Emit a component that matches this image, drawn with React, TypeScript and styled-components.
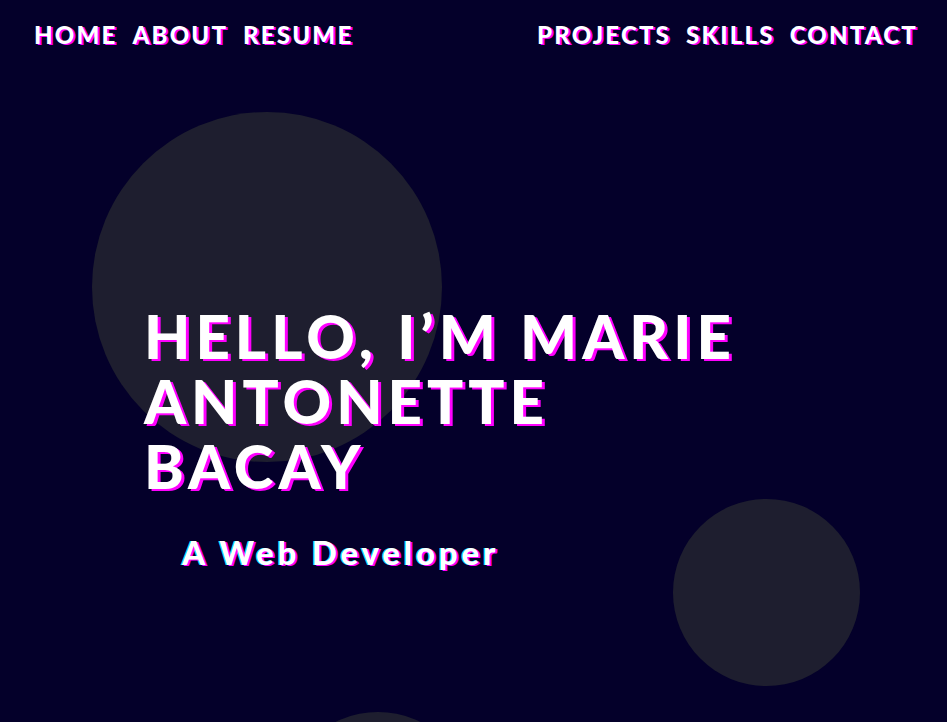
import React from "react";
import styled, { createGlobalStyle } from "styled-components";

const Global = createGlobalStyle`
  html, body { margin: 0; padding: 0; background: #04002a; }
  body { font-family: "Lato", "Noto Sans", sans-serif; overflow: hidden; }
`;

const Page = styled.div`
  position: relative;
  width: 947px;
  height: 722px;
  overflow: hidden;
  background: #04002a;
  color: #ffffff;
`;

const Bubble = styled.div<{ $size: number; $left: number; $top: number }>`
  position: absolute;
  left: ${(p) => p.$left}px;
  top: ${(p) => p.$top}px;
  width: ${(p) => p.$size}px;
  height: ${(p) => p.$size}px;
  border-radius: 50%;
  background: #1e1e2f;
  z-index: 0;
`;

const Nav = styled.nav`
  position: relative;
  z-index: 1;
  display: flex;
  justify-content: space-between;
  align-items: center;
  padding: 20px 29px 0 34px;
`;

const NavGroup = styled.div`
  display: flex;
  gap: 15px;
`;

const NavLink = styled.a`
  font-family: "Lato", sans-serif;
  font-weight: 900;
  font-size: 24px;
  letter-spacing: 2.2px;
  text-transform: uppercase;
  color: #ffffff;
  text-decoration: none;
  text-shadow: 2px 1px 0 #ff00ff;
`;

const Hero = styled.section`
  position: relative;
  z-index: 1;
  display: flex;
  flex-direction: column;
  padding: 255px 0 0 144px;
`;

const Title = styled.h1`
  margin: 0;
  width: 610px;
  font-family: "Lato", sans-serif;
  font-weight: 900;
  font-size: 60px;
  line-height: 65px;
  letter-spacing: 5px;
  text-transform: uppercase;
  color: #ffffff;
  text-shadow: 3px 2px 0 #ff00ff;
`;

const Subtitle = styled.h2`
  margin: 33px 0 0 38px;
  font-family: "Lato", sans-serif;
  font-weight: 900;
  font-size: 33px;
  letter-spacing: 3.8px;
  color: #ffffff;
  text-shadow: 2px 1px 0 #ff00ff, -1px 0 0 #00e5ff;
`;

export default function App() {
  return (
    <Page>
      <Global />
      <Bubble $size={350} $left={92} $top={112} />
      <Bubble $size={187} $left={673} $top={499} />
      <Bubble $size={190} $left={283} $top={712} />
      <Nav>
        <NavGroup>
          <NavLink href="#">Home</NavLink>
          <NavLink href="#">About</NavLink>
          <NavLink href="#">Resume</NavLink>
        </NavGroup>
        <NavGroup>
          <NavLink href="#">Projects</NavLink>
          <NavLink href="#">Skills</NavLink>
          <NavLink href="#">Contact</NavLink>
        </NavGroup>
      </Nav>
      <Hero>
        <Title>Hello, I’m Marie Antonette Bacay</Title>
        <Subtitle>A Web Developer</Subtitle>
      </Hero>
    </Page>
  );
}
